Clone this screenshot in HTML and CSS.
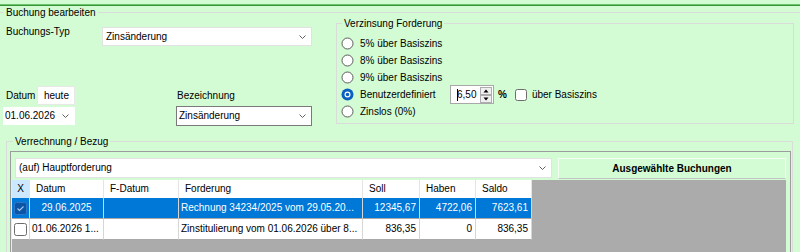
FILE: index.html
```html
<!DOCTYPE html>
<html lang="de">
<head>
    <meta charset="UTF-8">
    <title>Buchung bearbeiten</title>
    <link rel="stylesheet" href="styles.css">
</head>
<body>

    <div class="topbar"></div>

    <div class="group main-group">
        <div class="legend">Buchung bearbeiten</div>

        <div class="top-row">
            <!-- Typ, Datum, Bezeichnung -->
            <div class="left-col">
                <div class="typ-row">
                    <div class="typ-label">Buchungs-Typ</div>
                    <div class="combo typ-combo">
                        <span>Zinsänderung</span>
                        <svg class="chevron" width="7" height="4" viewBox="0 0 7 4"><polyline points="0.5,0.5 3.5,3.5 6.5,0.5" fill="none" stroke="#606060" stroke-width="1"/></svg>
                    </div>
                </div>

                <div class="date-row">
                    <div class="datum-col">
                        <div class="datum-line">
                            <span>Datum</span>
                            <div class="heute">heute</div>
                        </div>
                        <div class="combo datum-combo">
                            <span>01.06.2026</span>
                            <svg class="chevron" width="7" height="4" viewBox="0 0 7 4"><polyline points="0.5,0.5 3.5,3.5 6.5,0.5" fill="none" stroke="#606060" stroke-width="1"/></svg>
                        </div>
                    </div>
                    <div class="bez-col">
                        <div class="bez-label">Bezeichnung</div>
                        <div class="combo bez-combo">
                            <span>Zinsänderung</span>
                            <svg class="chevron" width="7" height="4" viewBox="0 0 7 4"><polyline points="0.5,0.5 3.5,3.5 6.5,0.5" fill="none" stroke="#606060" stroke-width="1"/></svg>
                        </div>
                    </div>
                </div>
            </div>

            <!-- Verzinsung -->
            <div class="group zins-group">
                <div class="legend">Verzinsung Forderung</div>
                <div class="radio-list">
                    <div class="radio-row">
                        <svg class="radio" width="13" height="13" viewBox="0 0 13 13"><circle cx="6.5" cy="6.5" r="5.5" fill="#fff" stroke="#5c5c5c"/></svg>
                        <span>5% über Basiszins</span>
                    </div>
                    <div class="radio-row">
                        <svg class="radio" width="13" height="13" viewBox="0 0 13 13"><circle cx="6.5" cy="6.5" r="5.5" fill="#fff" stroke="#5c5c5c"/></svg>
                        <span>8% über Basiszins</span>
                    </div>
                    <div class="radio-row">
                        <svg class="radio" width="13" height="13" viewBox="0 0 13 13"><circle cx="6.5" cy="6.5" r="5.5" fill="#fff" stroke="#5c5c5c"/></svg>
                        <span>9% über Basiszins</span>
                    </div>
                    <div class="radio-row">
                        <svg class="radio" width="13" height="13" viewBox="0 0 13 13"><circle cx="6.5" cy="6.5" r="6" fill="#0a5fc0"/><circle cx="6.5" cy="6.5" r="3" fill="#fff"/><circle cx="6.5" cy="6.5" r="1.8" fill="#0a5fc0"/></svg>
                        <span class="custom-label">Benutzerdefiniert</span>
                        <div class="spin">
                            <span class="caret"></span><span>6,50</span>
                            <svg class="spin-arrows" width="12" height="16" viewBox="0 0 12 16">
                                <rect x="0.5" y="0.5" width="11" height="7" fill="#f0f0f0" stroke="#adadad"/>
                                <rect x="0.5" y="8.5" width="11" height="7" fill="#f0f0f0" stroke="#adadad"/>
                                <polygon points="3.5,5.5 8.5,5.5 6,2.5" fill="#000"/>
                                <polygon points="3.5,10.5 8.5,10.5 6,13.5" fill="#000"/>
                            </svg>
                        </div>
                        <b class="percent">%</b>
                        <svg class="check" width="12" height="12" viewBox="0 0 12 12"><rect x="0.5" y="0.5" width="11" height="11" rx="2" fill="#fff" stroke="#6d6d6d"/></svg>
                        <span>über Basiszins</span>
                    </div>
                    <div class="radio-row">
                        <svg class="radio" width="13" height="13" viewBox="0 0 13 13"><circle cx="6.5" cy="6.5" r="5.5" fill="#fff" stroke="#5c5c5c"/></svg>
                        <span>Zinslos (0%)</span>
                    </div>
                </div>
            </div>
        </div>

        <!-- Verrechnung -->
        <div class="group verr-group">
            <div class="legend">Verrechnung / Bezug</div>
            <div class="panel">
                <div class="panel-toolbar">
                    <div class="combo haupt-combo">
                        <span>(auf) Hauptforderung</span>
                        <svg class="chevron" width="7" height="4" viewBox="0 0 7 4"><polyline points="0.5,0.5 3.5,3.5 6.5,0.5" fill="none" stroke="#606060" stroke-width="1"/></svg>
                    </div>
                    <div class="selected-btn">Ausgewählte Buchungen</div>
                </div>

                <div class="grid">
                    <div class="grid-row head">
                        <div class="cell x-head">X</div>
                        <div class="cell">Datum</div>
                        <div class="cell">F-Datum</div>
                        <div class="cell">Forderung</div>
                        <div class="cell">Soll</div>
                        <div class="cell">Haben</div>
                        <div class="cell">Saldo</div>
                    </div>
                    <div class="grid-row selected">
                        <div class="cell center">
                            <svg width="13" height="13" viewBox="0 0 13 13"><rect x="0.5" y="0.5" width="12" height="12" rx="2" fill="#0b55a6" stroke="#2f78c8"/><polyline points="3.5,6.5 5.5,8.5 9.5,4.5" fill="none" stroke="#a9cbee" stroke-width="1.1"/></svg>
                        </div>
                        <div class="cell center">29.06.2025</div>
                        <div class="cell"></div>
                        <div class="cell">Rechnung 34234/2025 vom 29.05.20...</div>
                        <div class="cell num">12345,67</div>
                        <div class="cell num">4722,06</div>
                        <div class="cell num">7623,61</div>
                    </div>
                    <div class="grid-row">
                        <div class="cell center">
                            <svg width="13" height="13" viewBox="0 0 13 13"><rect x="0.5" y="0.5" width="12" height="12" rx="2" fill="#fff" stroke="#6d6d6d"/></svg>
                        </div>
                        <div class="cell">01.06.2026 1...</div>
                        <div class="cell"></div>
                        <div class="cell">Zinstitulierung vom 01.06.2026 über 8...</div>
                        <div class="cell num">836,35</div>
                        <div class="cell num">0</div>
                        <div class="cell num">836,35</div>
                    </div>
                </div>
            </div>
        </div>
    </div>

</body>
</html>
```

FILE: styles.css
```css
body {
    margin: 0;
    width: 800px;
    height: 252px;
    overflow: hidden;
    background: #d4fcd4;
    font-family: "Liberation Sans", Arial, sans-serif;
    font-size: 10px;
    line-height: 12px;
    color: #000;
}

.topbar {
    margin-top: 4px;
    border-top: 1px solid #6cc46c;
    border-bottom: 1px solid #379737;
}

/* Group boxes */
.group {
    border: 1px solid #d9dcd9;
    box-sizing: border-box;
}

.legend {
    width: fit-content;
    margin-top: -6px;
    padding: 0 2px;
    background: #d4fcd4;
}

.main-group {
    margin-top: 6px;
    border-width: 1px 0 0 0;
}

.main-group > .legend {
    margin-left: 4px;
}

.top-row {
    display: flex;
    align-items: flex-start;
}

/* Combo boxes */
.combo {
    display: flex;
    align-items: center;
    justify-content: space-between;
    box-sizing: border-box;
    background: #fff;
    border: 1px solid #e2e2e2;
    padding-right: 5px;
}

.left-col {
    width: 306px;
    padding-left: 6px;
}

.typ-row {
    display: flex;
    align-items: flex-start;
    margin-top: 7px;
}

.typ-label {
    width: 96px;
}

.typ-combo {
    width: 210px;
    height: 19px;
    margin-top: 1px;
    padding-left: 3px;
}

.date-row {
    display: flex;
    margin-top: 40px;
}

.datum-col {
    width: 171px;
}

.datum-line {
    display: flex;
    align-items: center;
    height: 19px;
}

.heute {
    display: flex;
    align-items: center;
    justify-content: center;
    box-sizing: border-box;
    width: 38px;
    height: 19px;
    margin-left: 2px;
    background: #fff;
    border: 1px solid #e8e8e8;
}

.datum-combo {
    width: 72px;
    height: 18px;
    margin-top: 2px;
    margin-left: -3px;
    padding-left: 1px;
    border-color: #fff;
}

.bez-label {
    margin-top: 4px;
    padding-left: 1px;
}

.bez-combo {
    width: 136px;
    height: 20px;
    margin-top: 4px;
    padding-left: 2px;
    border-color: #7a7a7a;
}

/* Verzinsung */
.zins-group {
    width: 458px;
    height: 101px;
    margin-left: 24px;
    margin-top: 4px;
}

.zins-group > .legend {
    margin-left: 5px;
}

.radio-list {
    margin-top: 5px;
    padding-left: 5px;
}

.radio-row {
    display: flex;
    align-items: center;
    height: 17px;
}

.radio {
    margin-left: -1px;
    margin-right: 6px;
}

.custom-label {
    width: 90px;
}

.spin {
    display: flex;
    align-items: center;
    box-sizing: border-box;
    width: 44px;
    height: 19px;
    padding-left: 6px;
    background: #fff;
    border: 1px solid #a8a8a8;
}

.caret {
    width: 1px;
    height: 12px;
    margin-right: -1px;
    background: #000;
}

.spin-arrows {
    margin-left: auto;
    margin-right: 1px;
}

.percent {
    margin-left: 4px;
    margin-right: 8px;
}

.check {
    margin-right: 5px;
}

/* Verrechnung */
.verr-group {
    width: 787px;
    height: 111px;
    margin-top: 15px;
    margin-left: 6px;
    border-bottom: none;
}

.verr-group > .legend {
    margin-left: 6px;
}

.panel {
    height: 100px;
    margin: 3px 1px 0 3px;
    border: 1px solid #9c9c9c;
    border-bottom: none;
}

.panel-toolbar {
    display: flex;
    margin-top: 6px;
    padding-left: 4px;
}

.haupt-combo {
    width: 537px;
    height: 20px;
    padding-left: 3px;
}

.selected-btn {
    display: flex;
    align-items: center;
    justify-content: center;
    box-sizing: border-box;
    width: 228px;
    height: 21px;
    margin-left: 6px;
    font-weight: bold;
    background: #d4fcd4;
    border: 1px solid #f2fff2;
    border-bottom-color: #c4c4c4;
}

/* Data grid */
.grid {
    width: 774px;
    height: 72px;
    margin: 1px 0 0 1px;
    background: #ababab;
}

.grid-row {
    display: grid;
    grid-template-columns: 18px 74px 75px 184px 57px 56px 56px;
    width: 520px;
    background: #fff;
}

.cell {
    display: flex;
    align-items: center;
    box-sizing: border-box;
    height: 21px;
    padding: 0 2px;
    overflow: hidden;
    white-space: nowrap;
    border-right: 1px solid #d6d6d6;
    border-bottom: 1px solid #a8a8a8;
}

.head .cell {
    height: 18px;
    padding-left: 6px;
    border-bottom: none;
    border-right-color: #e4e4e4;
}

.head .x-head {
    justify-content: center;
    padding: 0;
    background: #cce8ff;
}

.cell.center {
    justify-content: center;
    padding: 0;
}

.cell.num {
    justify-content: flex-end;
    padding-right: 3px;
}

.selected {
    background: #0078d7;
    color: #fff;
}
```
